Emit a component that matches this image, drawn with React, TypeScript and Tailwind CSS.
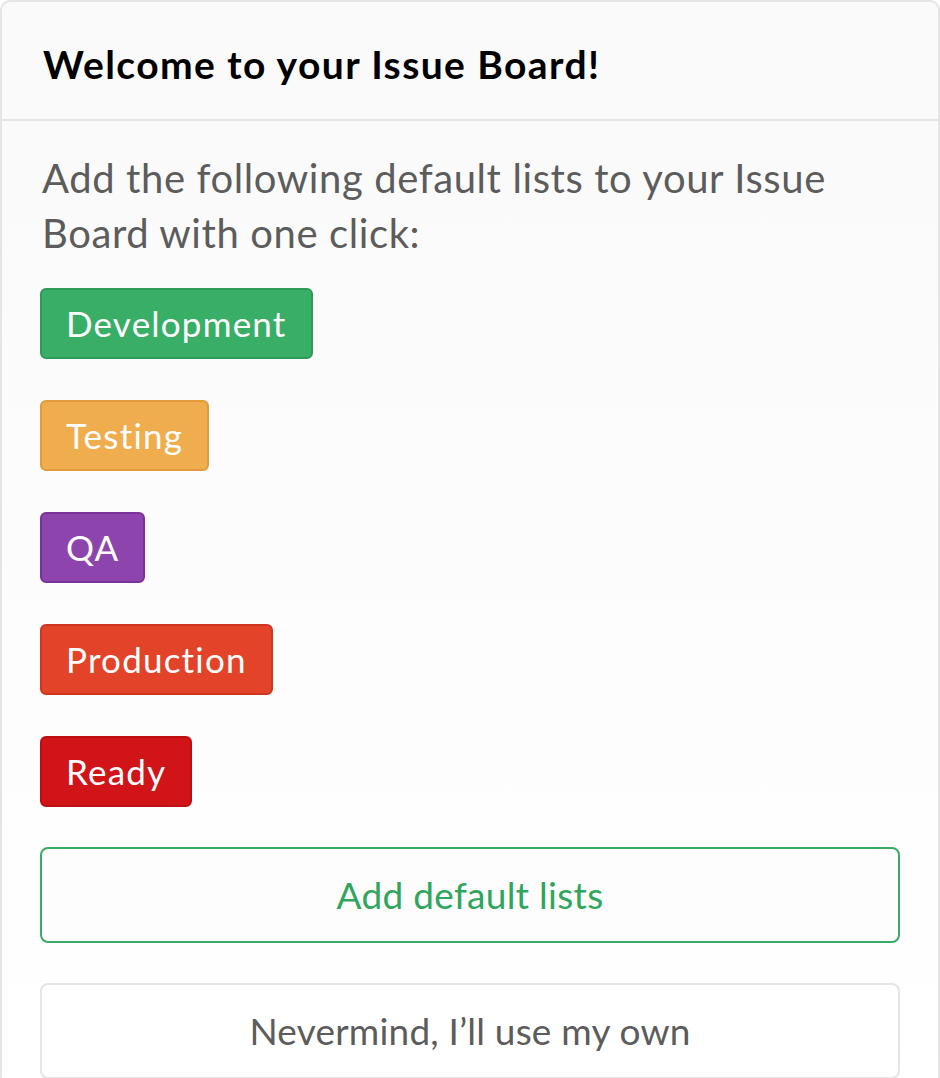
import React from 'react';

const lists = [
  { name: 'Development', classes: 'bg-[#39ae67] border-[#2f9a58]' },
  { name: 'Testing', classes: 'bg-[#f0ad4e] border-[#e39a3c]' },
  { name: 'QA', classes: 'bg-[#8e44ad] border-[#7a3499]' },
  { name: 'Production', classes: 'bg-[#e24329] border-[#cf3520]' },
  { name: 'Ready', classes: 'bg-[#d11418] border-[#bb0f13]' },
];

export default function App() {
  return (
    <div className="w-[940px] h-[1078px] overflow-hidden bg-white font-['Lato','Liberation_Sans',sans-serif]">
      <div className="h-full border-2 border-b-0 border-[#e5e5e5] rounded-t-[10px] bg-[#fafafa] flex flex-col">
        <div className="h-[119px] shrink-0 border-b-2 border-[#e5e5e5] px-[41px] flex items-center">
          <h2 className="text-[39px] font-bold tracking-[1.4px] text-black leading-none pt-[8px]">Welcome to your Issue Board!</h2>
        </div>
        <div className="flex-1 bg-gradient-to-b from-[#fafafa] to-white px-[38px] pt-[30px]">
          <p className="text-[40px] tracking-[0.6px] leading-[55px] text-[#5c5c5c] pl-[2px]">
            Add the following default lists to your Issue Board with one click:
          </p>
          <div className="mt-[27px] flex flex-col items-start gap-[41px]">
            {lists.map((list) => (
              <span
                key={list.name}
                className={`h-[71px] flex items-center px-[24px] rounded-[6px] border-2 text-white text-[35px] tracking-[1.2px] ${list.classes}`}
              >
                {list.name}
              </span>
            ))}
          </div>
          <button className="mt-[40px] w-full h-[96px] rounded-[8px] border-2 border-[#3aaa67] bg-[#fdfdfd] text-[#2fa65d] text-[37px] tracking-[0.3px]">
            Add default lists
          </button>
          <button className="mt-[40px] w-full h-[96px] rounded-[8px] border-2 border-[#e5e5e5] bg-white text-[#5c5c5c] text-[37px] tracking-[0.2px]">
            Nevermind, I’ll use my own
          </button>
        </div>
      </div>
    </div>
  );
}
